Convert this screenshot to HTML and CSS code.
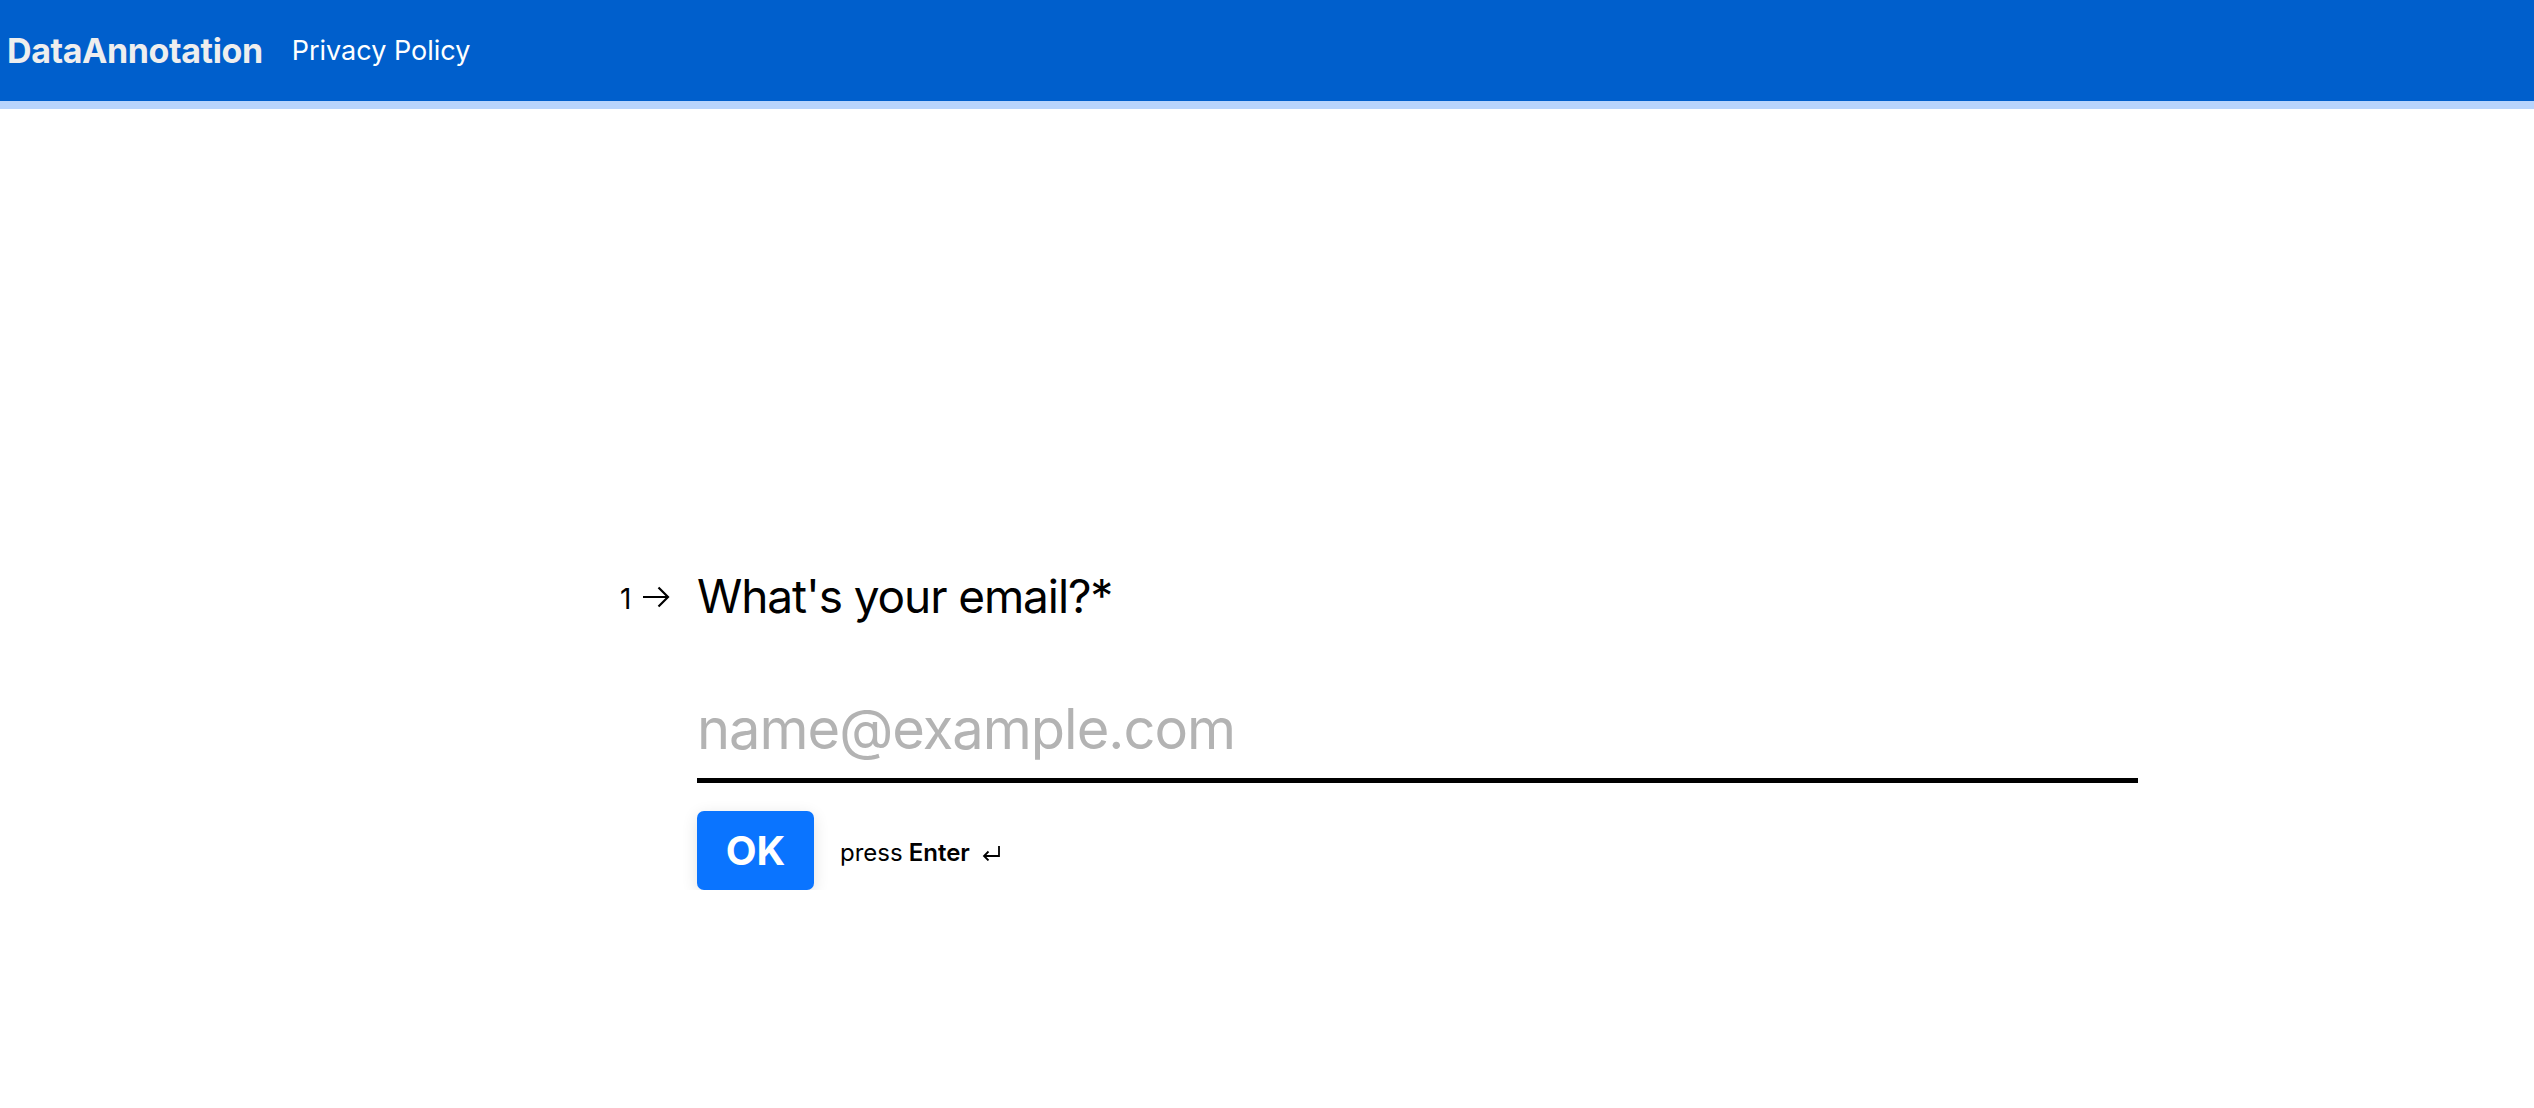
FILE: index.html
```html
<!DOCTYPE html>
<html lang="en">
<head>
  <meta charset="UTF-8">
  <title>DataAnnotation</title>
  <link rel="stylesheet" href="styles.css">
</head>
<body>
  <header class="topbar">
    <a href="#" class="brand">DataAnnotation</a>
    <a href="#" class="nav-link">Privacy Policy</a>
  </header>
  <div class="topbar-strip"></div>

  <main class="form-wrap">
    <div class="question">
      <div class="q-index">
        <span class="q-num">1</span>
        <svg class="q-arrow" width="28" height="22" viewBox="0 0 28 22">
          <path d="M1 11 H26 M16.5 1.5 L26 11 L16.5 20.5" fill="none" stroke="#000" stroke-width="2.2"/>
        </svg>
      </div>
      <div class="q-body">
        <h2 class="q-title">What's your email?*</h2>
        <input type="email" class="q-input" placeholder="name@example.com">
        <div class="q-actions">
          <button class="ok-btn">OK</button>
          <span class="hint">press <strong>Enter</strong>
            <svg class="enter-icon" width="19" height="16" viewBox="0 0 19 16">
              <path d="M17 1 V11 H2 M6.5 6.5 L2 11 L6.5 15.5" fill="none" stroke="#000" stroke-width="1.8"/>
            </svg>
          </span>
        </div>
      </div>
    </div>
  </main>
</body>
</html>
```

FILE: styles.css
```css
body {
  margin: 0;
  font-family: 'Inter', 'Liberation Sans', sans-serif;
  background: #fff;
  color: #000;
}

.topbar {
  height: 101px;
  background-color: #005fcc;
  display: flex;
  align-items: center;
  padding: 0 7px;
  gap: 29px;
  box-sizing: border-box;
}

.topbar-strip {
  height: 8px;
  background-color: #b8d4fc;
}

.brand {
  font-size: 34px;
  font-weight: 700;
  color: #eee;
  text-decoration: none;
  letter-spacing: -0.4px;
}

.nav-link {
  font-size: 27px;
  color: #fff;
  text-decoration: none;
}

.form-wrap {
  padding-top: 458px;
  padding-left: 620px;
}

.question {
  display: flex;
}

.q-index {
  width: 77px;
  display: flex;
  align-items: center;
  height: 58px;
  gap: 11px;
}

.q-num {
  font-size: 28px;
  margin-top: 6px;
}

.q-arrow {
  margin-top: 2px;
}

.q-body {
  width: 1441px;
}

.q-title {
  margin: 0;
  font-size: 46px;
  font-weight: 400;
  letter-spacing: -1.1px;
  line-height: 58px;
}

.q-input {
  display: block;
  width: 100%;
  margin-top: 69px;
  padding: 0 0 14px 0;
  border: none;
  border-bottom: 5px solid #000;
  font-family: inherit;
  font-size: 56px;
  letter-spacing: -1px;
  line-height: 70px;
  outline: none;
  background: transparent;
}

.q-input::placeholder {
  color: #b3b3b3;
}

.q-actions {
  display: flex;
  align-items: center;
  gap: 26px;
  margin-top: 28px;
}

.ok-btn {
  width: 117px;
  height: 79px;
  border: none;
  border-radius: 7px;
  background-color: #0a74ff;
  color: #fff;
  font-family: inherit;
  font-size: 40px;
  font-weight: 700;
  box-shadow: 0 4px 16px rgba(0, 0, 0, 0.12);
  cursor: pointer;
}

.hint {
  font-size: 24px;
  display: flex;
  align-items: center;
  gap: 6px;
  margin-top: 4px;
}

.hint strong {
  font-weight: 600;
  margin-right: 6px;
}
```
